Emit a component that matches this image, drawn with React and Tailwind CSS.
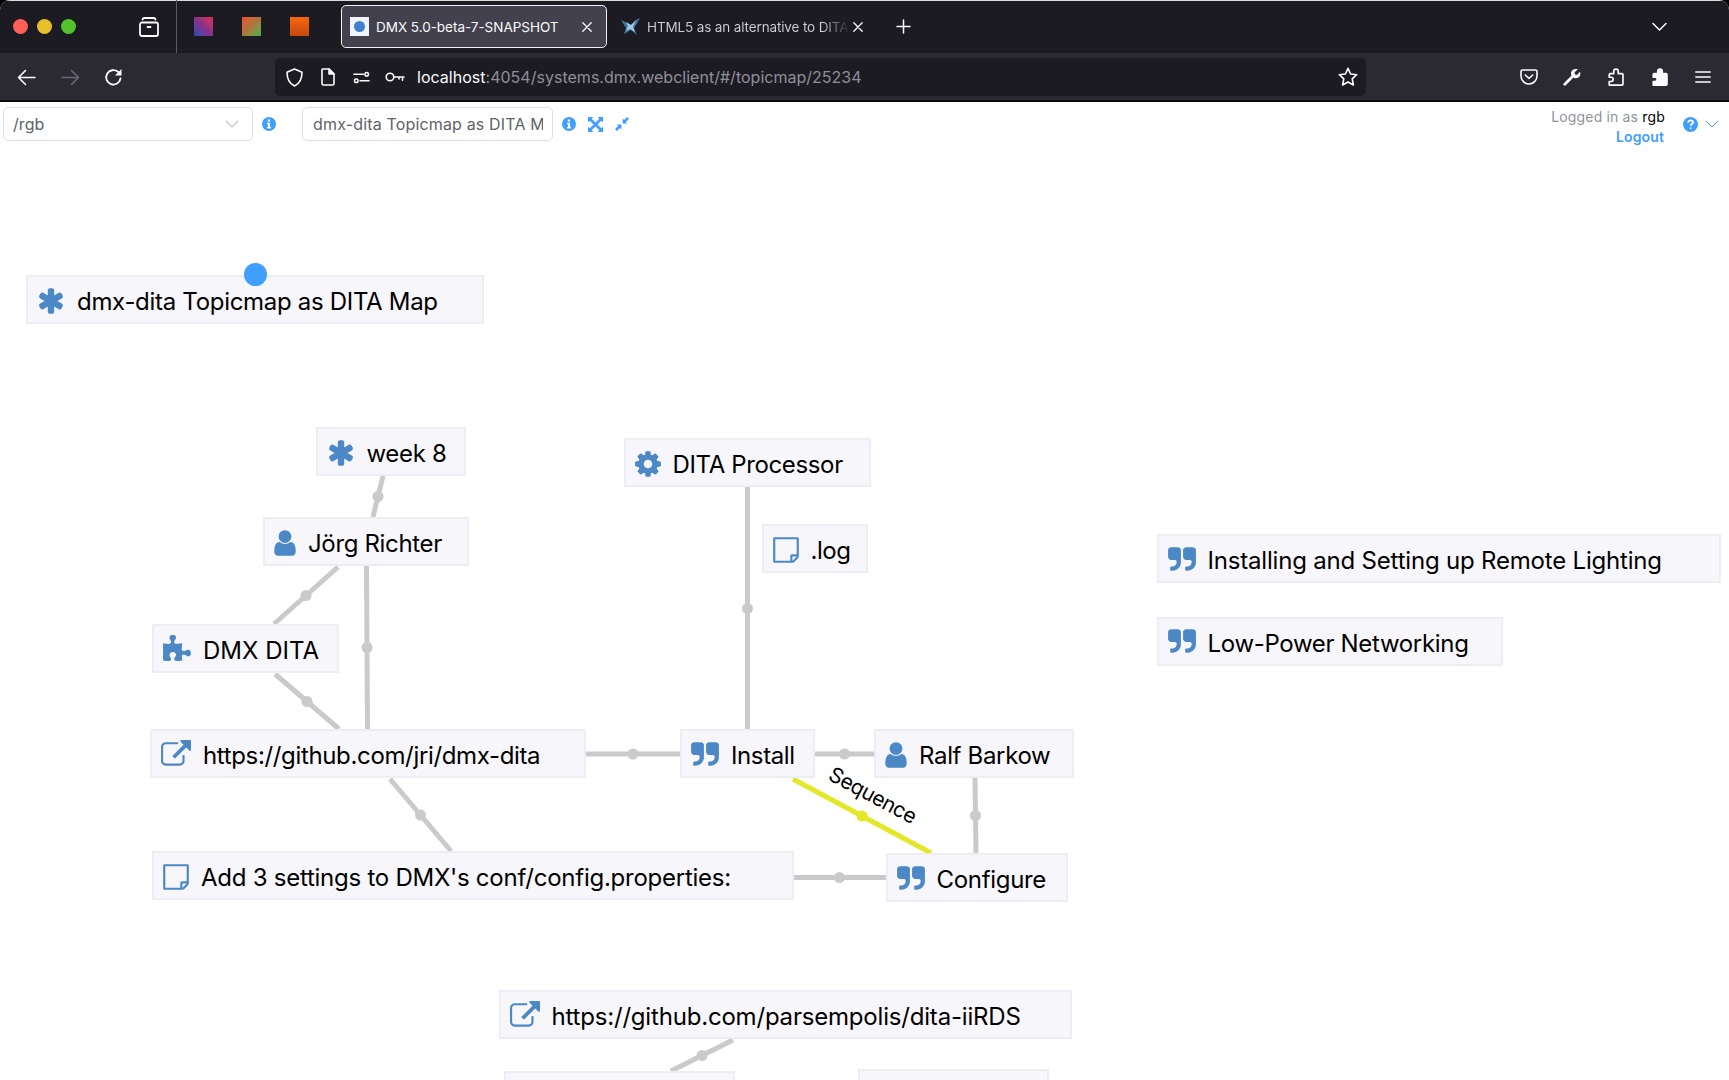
import React from "react";

const ICONS = {
  asterisk: {
    box: "64 0 1664 1792",
    size: "w-[28px]",
    d: "M1546 1050q46 26 59.5 77.5t-12.5 97.5l-64 110q-26 46-77.5 59.5t-97.5-12.5l-266-153v307q0 52-38 90t-90 38h-128q-52 0-90-38t-38-90v-307l-266 153q-46 26-97.5 12.5t-77.5-59.5l-64-110q-26-46-12.5-97.5t59.5-77.5l266-154-266-154q-46-26-59.5-77.5t12.5-97.5l64-110q26-46 77.5-59.5t97.5 12.5l266 153v-307q0-52 38-90t90-38h128q52 0 90 38t38 90v307l266-153q46-26 97.5-12.5t77.5 59.5l64 110q26 46 12.5 97.5t-59.5 77.5l-266 154z",
  },
  cog: {
    box: "128 0 1536 1792",
    size: "w-[26px]",
    d: "M1152 896q0-106-75-181t-181-75-181 75-75 181 75 181 181 75 181-75 75-181zm512-109v222q0 12-8 23t-20 13l-185 28q-19 54-39 91 35 50 107 138 10 12 10 25t-9 23q-27 37-99 108t-94 71q-12 0-26-9l-138-108q-44 23-91 38-16 136-29 186-7 28-36 28h-222q-14 0-24.5-8.5t-11.5-21.5l-28-184q-49-16-90-37l-141 107q-10 9-25 9-14 0-25-11-126-114-165-168-7-10-7-23 0-12 8-23 15-21 51-66.5t54-70.5q-27-50-41-99l-183-27q-13-2-21-12.5t-8-23.5v-222q0-12 8-23t19-13l186-28q14-46 39-92-40-57-107-138-10-12-10-24 0-10 9-23 26-36 98.5-107.5t94.5-71.5q13 0 26 10l138 107q44-23 91-38 16-136 29-186 7-28 36-28h222q14 0 24.5 8.5t11.5 21.5l28 184q49 16 90 37l142-107q9-9 24-9 13 0 25 10 129 119 165 170 7 8 7 22 0 12-8 23-15 21-51 66.5t-54 70.5q26 50 41 98l183 28q13 2 21 12.5t8 23.5z",
  },
  user: {
    box: "256 0 1280 1792",
    size: "w-[22px]",
    d: "M1536 1399q0 109-62.5 187t-150.5 78h-854q-88 0-150.5-78t-62.5-187q0-85 8.5-160.5t31.5-152 58.5-131 94-89 134.5-34.5q131 128 313 128t313-128q76 0 134.5 34.5t94 89 58.5 131 31.5 152 8.5 160.5zm-256-887q0 159-112.5 271.5t-271.5 112.5-271.5-112.5-112.5-271.5 112.5-271.5 271.5-112.5 271.5 112.5 112.5 271.5z",
  },
  quote: {
    box: "64 0 1664 1792",
    size: "w-[28px]",
    d: "M832 320v704q0 104-40.5 198.5t-109.5 163.5-163.5 109.5-198.5 40.5h-64q-26 0-45-19t-19-45v-128q0-26 19-45t45-19h64q106 0 181-75t75-181v-32q0-40-28-68t-68-28h-224q-80 0-136-56t-56-136v-384q0-80 56-136t136-56h384q80 0 136 56t56 136zm896 0v704q0 104-40.5 198.5t-109.5 163.5-163.5 109.5-198.5 40.5h-64q-26 0-45-19t-19-45v-128q0-26 19-45t45-19h64q106 0 181-75t75-181v-32q0-40-28-68t-68-28h-224q-80 0-136-56t-56-136v-384q0-80 56-136t136-56h384q80 0 136 56t56 136z",
  },
  link: {
    box: "0 0 1792 1792",
    size: "w-[30px]",
    d: "M1408 928v320q0 119-84.5 203.5t-203.5 84.5h-832q-119 0-203.5-84.5t-84.5-203.5v-832q0-119 84.5-203.5t203.5-84.5h704q14 0 23 9t9 23v64q0 14-9 23t-23 9h-704q-66 0-113 47t-47 113v832q0 66 47 113t113 47h832q66 0 113-47t47-113v-320q0-14 9-23t23-9h64q14 0 23 9t9 23zm384-864v512q0 26-19 45t-45 19-45-19l-176-176-652 652q-10 10-23 10t-23-10l-114-114q-10-10-10-23t10-23l652-652-176-176q-19-19-19-45t19-45 45-19h512q26 0 45 19t19 45z",
  },
  note: {
    box: "0 -24 1536 1792",
    size: "w-[26px]",
    d: "M1400 1256h-248v248q29-10 41-22l185-185q12-12 22-41zm-280-128h288v-896h-1280v1280h896v-288q0-40 28-68t68-28zm416-928v1024q0 40-20 88t-48 76l-184 184q-28 28-76 48t-88 20h-1024q-40 0-68-28t-28-68v-1344q0-40 28-68t68-28h1344q40 0 68 28t28 68z",
  },
  puzzle: {
    box: "91 0 1664 1792",
    size: "w-[28px]",
    d: "M1755 1083q0 81-44.5 135t-123.5 54q-41 0-77.5-17.5t-59-38-56.5-38-71-17.5q-110 0-110 124 0 39 16 115t15 115v5q-22 0-33 1-34 3-97.5 11.5t-115.5 13.5-98 5q-61 0-103-26.5t-42-83.5q0-37 17.5-71t38-56.5 38-59 17.5-77.5q0-79-54-123.5t-135-44.5q-84 0-143 45.5t-59 127.5q0 43 15 83t33.5 64.5 33.5 53 15 50.5q0 45-46 89-37 35-117 35-95 0-245-24-9-2-27.5-4t-27.5-4l-13-2q-1 0-3-1-2 0-2-1v-1024q2 1 17.5 3.5t34 5 21.5 3.5q150 24 245 24 80 0 117-35 46-44 46-89 0-22-15-50.5t-33.5-53-33.5-64.5-15-83q0-82 59-127.5t144-45.5q80 0 134 44.5t54 123.5q0 41-17.5 77.5t-38 59-38 56.5-17.5 71q0 57 42 83.5t103 26.5q64 0 180-15t163-17v2q-1 2-3.5 17.5t-5 34-3.5 21.5q-24 150-24 245 0 80 35 117 44 46 89 46 22 0 50.5-15t53-33.5 64.5-33.5 83-15q82 0 127.5 59t45.5 143z",
  },
};

/* Canvas coordinates are measured from the top of the browser's content area. */
const TOPICS = [
  { icon: "asterisk", label: "dmx-dita Topicmap as DITA Map", pos: "left-[26px] top-[173px] w-[458px]", track: "tracking-[-0.0125em]" },
  { icon: "asterisk", label: "week 8", pos: "left-[315.500px] top-[325px] w-[150px]", track: "tracking-[-0.014em]" },
  { icon: "user", label: "Jörg Richter", pos: "left-[263px] top-[415px] w-[206px]", track: "tracking-[-0.014em]" },
  { icon: "puzzle", label: "DMX DITA", pos: "left-[152px] top-[522px] w-[187px]", track: "tracking-[0.001em]" },
  { icon: "link", label: "https://github.com/jri/dmx-dita", pos: "left-[150px] top-[627px] w-[436px]", track: "tracking-[-0.0145em]" },
  { icon: "cog", label: "DITA Processor", pos: "left-[623.500px] top-[336px] w-[247px]", track: "tracking-[-0.015em]" },
  { icon: "note", label: ".log", pos: "left-[761.500px] top-[422px] w-[106px]", track: "tracking-[-0.018em]" },
  { icon: "quote", label: "Install", pos: "left-[680px] top-[627px] w-[135px]", track: "tracking-[-0.016em]" },
  { icon: "user", label: "Ralf Barkow", pos: "left-[874px] top-[627px] w-[200px]", track: "tracking-[-0.014em]" },
  { icon: "quote", label: "Configure", pos: "left-[885.500px] top-[751px] w-[182px]", track: "tracking-[-0.013em]" },
  { icon: "note", label: "Add 3 settings to DMX's conf/config.properties:", pos: "left-[152px] top-[749px] w-[642px]", track: "tracking-[-0.0105em]" },
  { icon: "link", label: "https://github.com/parsempolis/dita-iiRDS", pos: "left-[498.500px] top-[888px] w-[573px]", track: "tracking-[-0.008em]" },
  { icon: "quote", label: "Installing and Setting up Remote Lighting", pos: "left-[1156.500px] top-[432px] w-[564px]", track: "tracking-[-0.008em]" },
  { icon: "quote", label: "Low-Power Networking", pos: "left-[1156.500px] top-[514.500px] w-[346px]", track: "tracking-[-0.0135em]" },
];

const EDGES = [
  [383, 374, 373, 415],
  [338, 465, 274, 522],
  [366.5, 464, 367.5, 627],
  [275, 572, 339, 627],
  [586, 652, 680, 652],
  [814, 652, 875, 652],
  [747.5, 385, 747.5, 628],
  [975, 675, 976, 752],
  [793, 775.5, 886, 775.5],
  [390, 677, 451, 749],
  [733, 938, 671, 969],
];

function TopicIcon({ name }) {
  const i = ICONS[name];
  return (
    <svg viewBox={i.box} className={`mt-[2px] h-[30px] shrink-0 ${i.size}`} fill="#4b88c5">
      <path d={i.d} />
    </svg>
  );
}

function Topic({ icon, label, pos, track }) {
  return (
    <div className={`absolute flex h-[49px] items-center gap-[12px] border-2 border-[#eceef4] bg-[#f6f6fb] pl-[9px] text-[24px] leading-none whitespace-nowrap text-black ${pos}`}>
      <TopicIcon name={icon} />
      <span className={`mt-[5px] ${track}`}>{label}</span>
    </div>
  );
}

function Line({ className, children, w = 1.5, size = 16 }) {
  return (
    <svg viewBox={`0 0 ${size} ${size}`} className={`shrink-0 ${className}`} fill="none" stroke="currentColor" strokeWidth={w} strokeLinecap="round" strokeLinejoin="round">
      {children}
    </svg>
  );
}

function Close() {
  return <Line className="size-[10px]" size={10} w={1.3}><path d="M.8.8l8.4 8.400M9.200.8L.8 9.200" /></Line>;
}

const PUZZLE = "M2 15.2h11.200a1 1 0 0 0 1-1V6a1 1 0 0 0-1-1H10V3a2 2 0 0 0-4 0v2H3a1 1 0 0 0-1 1v2.200h1.600a1.900 1.900 0 0 1 0 3.800H2z";

function TabBar() {
  return (
    <div className="flex h-[53px] items-center border-t border-[#d7dcdf] bg-[#1c1b22] pb-px text-[#fbfbfe]">
      <div className="ml-[13px] flex gap-[9px]">
        <span className="size-[15px] rounded-full bg-[#fe5f57]" />
        <span className="size-[15px] rounded-full bg-[#e6c029]" />
        <span className="size-[15px] rounded-full bg-[#53c22b]" />
      </div>
      <Line className="ml-[63px] size-[20px]" size={20} w={1.8}>
        <path d="M3.500 2.500Q3.800 1 5.500 1h9Q16.200 1 16.500 2.500M8.500 10h3" />
        <rect x="1" y="5.500" width="18" height="13.500" rx="2" />
      </Line>
      <div className="ml-[17px] h-[53px] w-px bg-[#5b5a63]" />
      <span className="ml-[17px] size-[19px] bg-linear-to-tr from-[#1c46b8] via-[#85308a] to-[#e8204b]" />
      <span className="ml-[29px] size-[19px] bg-linear-to-br from-[#f04b2c] via-[#a8763e] to-[#1fb14c]" />
      <span className="ml-[29px] size-[19px] bg-linear-to-b from-[#f8670d] to-[#c8480f]" />
      <div className="ml-[32px] flex h-[43px] w-[266px] items-center rounded-[5px] border-[1.5px] border-[#f1f1f5] bg-[#42414d] pr-[14px] pl-[8px]">
        <span className="flex size-[19px] items-center justify-center bg-[#f0f3fa]">
          <span className="size-[11px] rounded-full bg-[#3f7fcb]" />
        </span>
        <span className="ml-[7px] flex-1 pt-[2px] text-[13.5px] tracking-[-0.002em] whitespace-nowrap">DMX 5.0-beta-7-SNAPSHOT</span>
        <Close />
      </div>
      <svg viewBox="0 0 20 20" className="ml-[14px] size-[20px]">
        <path d="M0 3l6 3 4 2 5-5 4-2-4 7-2 3 3 7-6-5-7 4 2-6z" fill="#3a7ba6" />
        <path d="M5 5l5 3 5-5-3 7 2 5-5-3-4 2 2-5z" fill="#a9c6e0" />
      </svg>
      <div className="ml-[6px] w-[203px] overflow-hidden bg-linear-to-r from-[#cfcfd8] from-[86%] to-transparent bg-clip-text pt-[2px] text-[13.5px] tracking-[-0.010em] whitespace-nowrap text-transparent">
        HTML5 as an alternative to DITA
      </div>
      <div className="ml-[3px]"><Close /></div>
      <Line className="ml-[33px] size-[15px]" size={15}><path d="M7.500 1v13M1 7.500h13" /></Line>
      <Line className="mr-[62px] ml-auto size-[15px]" size={15}><path d="M1 4.500l6.500 6.500L14 4.500" /></Line>
    </div>
  );
}

function NavBar() {
  return (
    <div className="flex h-[49px] items-center border-b-2 border-[#0c0c0d] bg-[#2b2a33] pt-px text-[#fbfbfe]">
      <Line className="ml-[17px] size-[19px]" size={19} w={1.6}><path d="M18 9.500H1.500M8.500 2.500l-7 7 7 7" /></Line>
      <Line className="ml-[25px] size-[19px] text-[#6a6973]" size={19} w={1.6}><path d="M1 9.500h16.500M10.500 2.500l7 7-7 7" /></Line>
      <svg viewBox="0 0 19 19" className="ml-[24px] size-[19px]">
        <path d="M16.500 10.500A7.200 7.200 0 1 1 14 3.800" fill="none" stroke="currentColor" strokeWidth="1.800" strokeLinecap="round" />
        <path d="M17.500 1v6.500H11z" fill="currentColor" />
      </svg>
      <div className="ml-[152px] flex h-[38px] w-[1091px] items-center rounded-[5px] bg-[#1c1b22]">
        <Line className="ml-[10px] size-[19px]" size={19} w={1.6}><path d="M9.500 1L17 4.200c0 6-1.500 11-7.500 13.800C3.500 15.200 2 10.200 2 4.200z" /></Line>
        <Line className="ml-[15px] size-[18px]" size={18} w={1.6}><path d="M3.500 1H10l5 5v9.500a1.500 1.500 0 0 1-1.500 1.500h-9A1.500 1.500 0 0 1 3 15.500V1.500z" /><path d="M10 1v5h5z" fill="currentColor" /></Line>
        <Line className="ml-[16px] size-[17px]" size={18} w={1.6}><path d="M1 5.500h10M7.500 12.500H17" /><circle cx="14.500" cy="5.500" r="1.900" /><circle cx="3.500" cy="12.500" r="1.900" /></Line>
        <Line className="ml-[15px] size-[20px]" size={20} w={1.6}><circle cx="5" cy="10" r="3.800" /><path d="M9 10h10M17.500 10v3.200M14 10v2" /></Line>
        <div className="ml-[12px] text-[16px] tracking-[0.001em] whitespace-nowrap text-[#8f8f99]">
          <span className="text-[#fbfbfe]">localhost</span>:4054/systems.dmx.webclient/#/topicmap/25234
        </div>
        <Line className="mr-[8px] ml-auto size-[20px]" size={20} w={1.6}><path d="M10 1.300l2.600 5.700 6.100.7-4.500 4.200 1.200 6.100L10 15l-5.400 3 1.200-6.100L1.300 7.700l6.100-.7z" /></Line>
      </div>
      <div className="mr-[18px] ml-auto flex items-center gap-[26px]">
        <Line className="-mr-px size-[18px]" size={18} w={1.6}><path d="M2.500 2h13A1.500 1.500 0 0 1 17 3.500V8a8 8 0 0 1-16 0V3.500A1.500 1.500 0 0 1 2.500 2zM5.300 7L9 10.500 12.700 7" /></Line>
        <svg viewBox="0 0 18 18" className="size-[18px]" fill="none" stroke="currentColor" strokeLinecap="round">
          <path d="M1.800 16.200L10 8" strokeWidth="2.800" />
          <path d="M14.800 1.300L11.500 4.500l.5 2 2 .5 3-3.200c.9 2.500.2 4.500-1.500 5.700-1.300.9-3 1-4.500.4L8.300 7.300c-.6-1.500-.4-3.200.6-4.500 1.300-1.600 3.500-2.200 5.900-1.500z" fill="currentColor" stroke="none" />
        </svg>
        <Line className="size-[18px]" size={16} w={1.5}><path d={PUZZLE} /></Line>
        <Line className="size-[18px]" size={16} w={1.5}><path d={PUZZLE} fill="currentColor" /></Line>
        <Line className="size-[16px]" size={16}><path d="M.8 3h14.400M.8 8h14.400M.8 13h14.400" /></Line>
      </div>
    </div>
  );
}

function Info({ className }) {
  return (
    <svg viewBox="0 0 14 14" className={`size-[14px] shrink-0 ${className}`}>
      <circle cx="7" cy="7" r="7" fill="#409eff" />
      <path d="M5.800 2.400h2.300v2H5.800zM5 5.700h3.100v4.200H9v1.500H5V9.900h.9V7.200H5z" fill="#fff" />
    </svg>
  );
}

function Header() {
  return (
    <div className="flex h-[44px] items-center pl-[3px] text-[#409eff]">
      <div className="flex h-[34px] w-[250px] items-center justify-between rounded-[5px] border border-[#dcdfe6] pr-[13px] pl-[9px] text-[16px] text-[#606266]">
        <span className="tracking-[0.005em]">/rgb</span>
        <Line className="size-[14px] text-[#c0c4cc]" size={14} w={1.1}><path d="M1 4l6 6 6-6" /></Line>
      </div>
      <Info className="ml-[9px]" />
      <div className="relative ml-[26px] flex h-[34px] w-[251px] items-center rounded-[5px] border border-[#dcdfe6] pl-[10px] text-[16px] text-[#606266]">
        <Line className="absolute top-[9px] right-[13px] size-[14px] text-[#e3e5ea]" size={14} w={1.1}><path d="M1 4l6 6 6-6" /></Line>
        <span className="relative w-[230px] overflow-hidden tracking-[0.010em] whitespace-nowrap">dmx-dita Topicmap as DITA Map</span>
      </div>
      <Info className="ml-[9px]" />
      <svg viewBox="0 0 14 14" className="ml-[12px] size-[15px]" fill="currentColor">
        <path d="M0 0h5L3.400 1.600 7 5.200l3.600-3.600L9 0h5v5l-1.600-1.600L8.800 7l3.600 3.600L14 9v5H9l1.600-1.600L7 8.800l-3.600 3.600L5 14H0V9l1.600 1.600L5.200 7 1.600 3.400 0 5z" />
      </svg>
      <svg viewBox="0 0 14 14" className="ml-[12px] size-[14px]" fill="currentColor">
        <path d="M7.600 1.600l1.500 1.500L12.200 0 14 1.800l-3.100 3.100 1.500 1.500H7.600zM6.400 12.400l-1.500-1.500L1.800 14 0 12.200l3.100-3.100-1.500-1.500h4.800z" />
      </svg>
      <div className="mt-[6px] ml-auto pr-px text-right text-[14px] leading-[20px] text-[#909399]">
        <div className="tracking-[0.012em]">Logged in as <span className="text-black">rgb</span></div>
        <div className="pr-px font-semibold tracking-[0.008em] text-[#409eff]">Logout</div>
      </div>
      <svg viewBox="0 0 14 14" className="ml-[17px] size-[15px]">
        <circle cx="7" cy="7" r="7" fill="#409eff" />
        <path d="M4.700 5.300C4.900 3.800 5.900 3.200 7 3.200c1.300 0 2.300.7 2.300 1.900 0 1.500-2.200 1.500-2.200 3.100M7.100 9.700v1.500" fill="none" stroke="#fff" strokeWidth="1.700" />
      </svg>
      <Line className="mr-[10px] ml-[7px] size-[14px]" size={14} w={1}><path d="M1 4l6 6 6-6" /></Line>
    </div>
  );
}

function Edge({ p, color }) {
  const [x1, y1, x2, y2] = p;
  return (
    <g stroke={color} fill={color}>
      <line x1={x1} y1={y1} x2={x2} y2={y2} strokeWidth="5" />
      <circle cx={(x1 + x2) / 2} cy={(y1 + y2) / 2} r="5.500" stroke="none" />
    </g>
  );
}

export default function App() {
  return (
    <div className="h-[1080px] w-[1729px] overflow-hidden bg-black font-['Inter','Liberation_Sans',sans-serif]">
      <div className="flex h-full flex-col overflow-hidden rounded-t-[10px] bg-white">
        <TabBar />
        <NavBar />
        <div className="relative flex-1 overflow-hidden">
          <Header />
          <svg className="absolute top-0 left-0 h-[978px] w-[1729px]" viewBox="0 0 1729 978">
            {EDGES.map((p, i) => (
              <Edge key={i} p={p} color="#cacaca" />
            ))}
            <Edge p={[793, 677, 931, 751]} color="#e2e827" />
            <text x="827" y="677" transform="rotate(28.200 827 677)" fontSize="21" letterSpacing="-0.500">Sequence</text>
          </svg>
          {TOPICS.map((t) => (
            <Topic key={t.label} {...t} />
          ))}
          <div className="absolute top-[969px] left-[504px] h-[49px] w-[231px] border-2 border-[#eceef4] bg-[#f6f6fb]" />
          <div className="absolute top-[967px] left-[858px] h-[49px] w-[191px] border-2 border-[#eceef4] bg-[#f6f6fb]" />
          <div className="absolute top-[161px] left-[244px] size-[23px] rounded-full bg-[#409eff]" />
        </div>
      </div>
    </div>
  );
}
